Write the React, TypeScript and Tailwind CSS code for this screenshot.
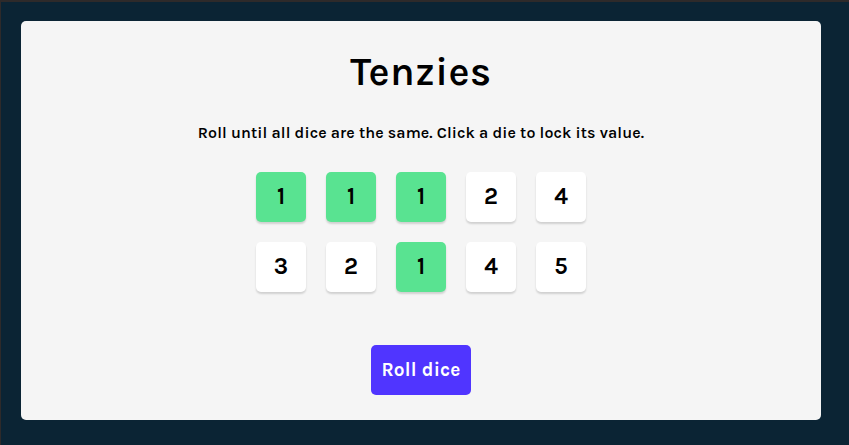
import React, { useState } from "react";

type Die = { value: number; held: boolean };

const initialDice: Die[] = [
  { value: 1, held: true },
  { value: 1, held: true },
  { value: 1, held: true },
  { value: 2, held: false },
  { value: 4, held: false },
  { value: 3, held: false },
  { value: 2, held: false },
  { value: 1, held: true },
  { value: 4, held: false },
  { value: 5, held: false },
];

const App = () => {
  const [dice, setDice] = useState<Die[]>(initialDice);

  const hold = (i: number) => {
    setDice((d) => d.map((die, j) => (j === i ? { ...die, held: !die.held } : die)));
  };

  const roll = () => {
    setDice((d) =>
      d.map((die) => (die.held ? die : { ...die, value: Math.ceil(Math.random() * 6) }))
    );
  };

  return (
    <div
      className="min-h-screen w-full bg-[#0B2434] p-[21px] border-t-2 border-l border-[#2e2a2a]"
      style={{ fontFamily: "Karla, Inter, 'Noto Sans', sans-serif" }}
    >
      <main className="h-[399px] w-[800px] -mt-[2px] -ml-px rounded-[5px] bg-[#F5F5F5] flex flex-col items-center pt-[27px]">
        <h1 className="text-[40px] leading-[48px] font-semibold text-black tracking-[0.5px]">Tenzies</h1>

        <p className="mt-[25px] text-[16px] leading-6 font-semibold text-black tracking-[0.1px]">
          Roll until all dice are the same. Click a die to lock its value.
        </p>

        {/* dice grid */}
        <div className="mt-[27px] grid grid-cols-5 gap-5">
          {dice.map((die, i) => (
            <button
              key={i}
              onClick={() => hold(i)}
              className={`h-[50px] w-[50px] rounded-[5px] shadow-[0_2px_2px_rgba(0,0,0,0.15)] flex items-center justify-center text-[23px] font-bold text-black ${
                die.held ? "bg-[#59E391]" : "bg-white"
              }`}
            >
              {die.value}
            </button>
          ))}
        </div>

        <button
          onClick={roll}
          className="mt-[53px] h-[50px] w-[100px] rounded-[5px] bg-[#5035FF] text-white text-[19px] font-bold tracking-[0.2px]"
        >
          Roll dice
        </button>
      </main>
    </div>
  );
};

export default App;
